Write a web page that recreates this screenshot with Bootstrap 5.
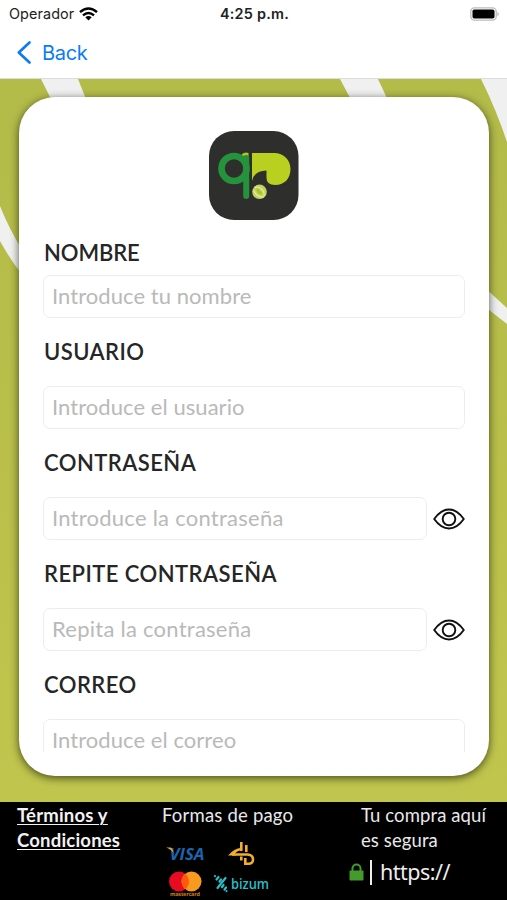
<!DOCTYPE html>
<html lang="es">
<head>
<meta charset="utf-8">
<meta name="viewport" content="width=device-width, initial-scale=1">
<title>Registro</title>
<link href="https://cdn.jsdelivr.net/npm/bootstrap@5.3.0/dist/css/bootstrap.min.css" rel="stylesheet">
<style>
body{font-family:Lato,"Open Sans",sans-serif;height:900px;background:#fff;color:#222}
.status-bar{height:28px;padding:0 7px 0 9px;font-family:Inter,sans-serif;font-size:15px;line-height:28px}
.status-bar .carrier{font-size:14.4px;letter-spacing:.1px;margin-right:5px}
.status-bar .clock{font-weight:600;font-size:14.4px;letter-spacing:.25px}
.top-nav{height:51px;padding-left:17px;border-bottom:1px solid #dcdcdc;font-family:Inter,sans-serif}
.top-nav a{color:#087cf8;font-size:20px;gap:11px;letter-spacing:-.3px}
.court{height:723px;padding:18px 18px 26px 19px;background:linear-gradient(#b3bb49,#bac04a 60%,#c0c64d)}
.court-lines{z-index:0}
.form-card{z-index:1;height:679px;border:0;border-radius:36px;padding:34px 25px 24px;box-shadow:0 2px 9px rgba(20,25,0,.72)}
.form-scroll{overflow:hidden;margin:0 -1px}
.form-scroll>form{padding:0 0 0 1px}
.logo{margin:0 2px 18px 0}
.field{margin-bottom:19px}
.field label{display:block;height:30px;line-height:30px;font-size:22px;font-weight:600;letter-spacing:.45px;margin-bottom:19px;color:#262626}
.field.first label{margin-bottom:7px;letter-spacing:-.1px}
.field .form-control{height:43px;margin-left:-1px;width:calc(100% + 1px);border:1px solid #ededed;border-radius:7px;padding:0 8px 2px;font-size:22px;letter-spacing:.06px;background:#fff}
.field .short{width:384px;letter-spacing:.25px}
.field .form-control::placeholder{color:#b9b9b9;opacity:1}
.eye{width:32px;flex:none;margin:0 0 0 6px}
.foot{height:98px;background:#000;color:#e9e9e9;font-size:18.5px;line-height:25px;padding-top:1px;letter-spacing:.2px}
.foot .terms{width:162px;padding-left:17px}
.foot .terms a{color:#f2f2f2;font-weight:700;text-underline-offset:2px;text-decoration-thickness:1px}
.foot .pay{width:187px}
.foot .safe{width:158px}
.foot .safe p{padding-left:12px;letter-spacing:.1px}
.https{font-family:"Noto Sans",sans-serif;font-size:21.5px;line-height:28px;margin-top:5px;color:#eee}
.https .bar{width:2px;height:25px;background:#eee;margin:0 8px 0 6px}
.https-text{letter-spacing:-.5px}
.brands{margin:12px 0 0 4px;letter-spacing:0}
</style>
<script src="https://cdn.jsdelivr.net/npm/bootstrap@5.3.0/dist/js/bootstrap.bundle.min.js"></script>
</head>
<body class="d-flex flex-column overflow-hidden">
<header>
  <div class="status-bar row g-0 align-items-center">
    <div class="col d-flex align-items-center"><span class="carrier">Operador</span>
      <svg width="19" height="14" viewBox="0 0 19 14" fill="none" stroke="#000" stroke-width="2.5"><path d="M1 5.1Q9.5-2 18 5.1M4 8.4Q9.500 3.700 15 8.400"/><path d="M6.300 10.200Q9.500 7.600 12.700 10.200L9.500 13.600Z" fill="#000" stroke="none"/></svg>
    </div>
    <div class="col-auto clock">4:25 p.m.</div>
    <div class="col d-flex justify-content-end">
      <svg width="30" height="14" viewBox="0 0 30 14"><rect x=".8" y=".8" width="25.400" height="12.400" rx="3.600" fill="#fff" stroke="#bcbcbc" stroke-width="1.300"/><rect x="2.500" y="2.500" width="22" height="9" rx="1.800"/><path d="M27.500 4.700Q30 7 27.500 9.300Z" fill="#aaa"/></svg>
    </div>
  </div>
  <nav class="top-nav d-flex align-items-center">
    <a href="#" class="d-flex align-items-center text-decoration-none"><svg width="14" height="24" viewBox="0 0 14 24" fill="none" stroke="#087cf8" stroke-width="2.600" stroke-linecap="round" stroke-linejoin="round"><path d="M12.500 1.500 1.800 11.500l10.700 10"/></svg>Back</a>
  </nav>
</header>
<main class="court position-relative">
  <svg class="court-lines position-absolute top-0 start-0" width="507" height="723" viewBox="0 0 507 723" fill="#f0f0f0"><path d="M41 0H78L90 30H56ZM340 0H378L392 30H356ZM481 0H507V63Q496 30 481 0ZM0 127Q9 150 24 174V198Q11 182 0 162ZM484 208 507 229V245L484 227Z"/></svg>
  <section class="card form-card position-relative">
    <div class="form-scroll flex-grow-1">
    <form>
      <div class="logo text-center lh-1">
        <svg class="d-block mx-auto" width="90" height="89" viewBox="0 0 90 89"><rect width="89.500" height="89" rx="25" fill="#2e2e2c"/><path d="M33 23Q36 20.500 39.500 22V32H33Z" fill="#b5c51e"/><path d="M43 22H65C75 22 81.500 29 81.500 38S76 54 66 54Q57.500 54 57.500 47V39.500Q45 40 43 50Z" fill="#b9d020"/><circle cx="25" cy="37.500" r="12.500" fill="none" stroke="#25933b" stroke-width="6.600"/><path d="M37.200 27V65" stroke="#25933b" stroke-width="6" stroke-linecap="round"/><circle cx="50.500" cy="60.800" r="7.300" fill="#c2d35b"/><path d="M45.500 56.500C50 54.500 56 59 55 65M44.500 59Q48 67 55 66" fill="none" stroke="#e3eab0" stroke-width="1.100"/><path d="M47 58Q50 56.500 53.500 63Q49 65 47 58Z" fill="#aac31e"/></svg>
      </div>
      <div class="field first"><label for="nombre">NOMBRE</label><input id="nombre" class="form-control" placeholder="Introduce tu nombre"></div>
      <div class="field"><label for="usuario">USUARIO</label><input id="usuario" class="form-control" placeholder="Introduce el usuario"></div>
      <div class="field"><label for="clave">CONTRASEÑA</label>
        <div class="d-flex align-items-center"><input id="clave" type="password" class="form-control short" placeholder="Introduce la contraseña">
        <svg class="eye" height="22" viewBox="0 0 32 22" fill="none" stroke="#111" stroke-width="1.900" stroke-linejoin="round"><path d="M1.200 11Q8 1.500 16 1.500T30.800 11Q24 20.500 16 20.500T1.200 11Z"/><circle cx="16" cy="11" r="6.300"/></svg></div></div>
      <div class="field"><label for="clave2">REPITE CONTRASEÑA</label>
        <div class="d-flex align-items-center"><input id="clave2" type="password" class="form-control short" placeholder="Repita la contraseña">
        <svg class="eye" height="22" viewBox="0 0 32 22" fill="none" stroke="#111" stroke-width="1.900" stroke-linejoin="round"><path d="M1.200 11Q8 1.500 16 1.500T30.800 11Q24 20.500 16 20.500T1.200 11Z"/><circle cx="16" cy="11" r="6.300"/></svg></div></div>
      <div class="field mb-0"><label for="correo">CORREO</label><input id="correo" type="email" class="form-control" placeholder="Introduce el correo"></div>
    </form>
    </div>
  </section>
</main>
<footer class="foot d-flex">
  <div class="terms"><a href="#">Términos y<br>Condiciones</a></div>
  <div class="pay">Formas de pago
    <svg class="brands d-block" width="110" height="58" viewBox="0 0 110 58">
      <text x="3.500" y="20" font-family="Open Sans, sans-serif" font-size="16.500" font-weight="700" font-style="italic" fill="#1b65ad" textLength="35" lengthAdjust="spacingAndGlyphs">VISA</text>
      <path d="M0 7.500H4.500Q6.500 8 7.500 13Q5 9 0 7.500Z" fill="#eda52c"/>
      <g fill="none" stroke="#f2ae2b" stroke-width="2.600"><path d="M75.300 2V11M75.300 16.500V20.500M80.300 5V12M66 14.500H82Q87 15 87 19.500T82 23.700H79.300V18"/></g><path d="M62 15.600Q68 8.500 74 8V10.500Q71 11 69 13.500L70 15.600Z" fill="#f2ae2b"/>
      <circle cx="13" cy="41.500" r="10" fill="#e90b22"/><circle cx="25.500" cy="41.500" r="10" fill="#f79a20"/><path d="M19.250 33.700A10 10 0 0 1 19.250 49.300 10 10 0 0 1 19.250 33.700Z" fill="#ff5a0c"/>
      <text x="4" y="56" font-family="Open Sans, sans-serif" font-size="5.500" font-weight="700" fill="#d87a14" textLength="30">mastercard</text>
      <g stroke="#27bfc6" stroke-width="2.200" stroke-linecap="round"><path d="M59.500 38 51.500 48M50.500 39.500 52.500 37M53.500 41.500 55 39.500M56 47 57.500 45M58.500 49.500 60 47.500"/><path d="M49 36.100V36M60.500 51V51.100"/></g>
      <text x="65" y="49" font-family="Open Sans, sans-serif" font-size="13.500" font-weight="600" fill="#27bfc6" textLength="38" lengthAdjust="spacingAndGlyphs">bizum</text>
    </svg>
  </div>
  <div class="safe"><p class="mb-0">Tu compra aquí<br>es segura</p>
    <div class="https d-flex align-items-center"><svg width="15" height="18" viewBox="0 0 15 18"><path d="M3.500 8V5.500a4 4 0 0 1 8 0V8" fill="none" stroke="#439b2b" stroke-width="2"/><rect y="7.500" x=".5" width="14" height="10" rx="1" fill="#439b2b"/></svg><span class="bar"></span><span class="https-text">https://</span></div>
  </div>
</footer>
</body>
</html>
